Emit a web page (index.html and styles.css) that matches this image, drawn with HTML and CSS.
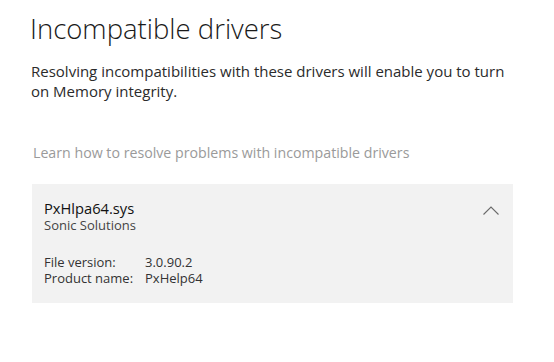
FILE: index.html
```html
<!DOCTYPE html>
<html>
<head>
<meta charset="utf-8">
<link rel="stylesheet" href="styles.css">
</head>
<body>
<main class="page">
  <h1 class="title">Incompatible drivers</h1>
  <p class="desc">Resolving incompatibilities with these drivers will enable you to turn on Memory integrity.</p>
  <a class="learn">Learn how to resolve problems with incompatible drivers</a>
  <section class="card">
    <div class="card-head">
      <div>
        <div class="name">PxHlpa64.sys</div>
        <div class="vendor">Sonic Solutions</div>
      </div>
      <svg class="chev" width="16" height="9" viewBox="0 0 16 9"><path d="M0.5 8.5 L8 1 L15.5 8.5" fill="none" stroke="#6a6a6a" stroke-width="1.1"/></svg>
    </div>
    <div class="props">
      <span class="k">File version:</span><span class="v">3.0.90.2</span>
      <span class="k">Product name:</span><span class="v">PxHelp64</span>
    </div>
  </section>
</main>
</body>
</html>
```
FILE: styles.css
```css
html, body { margin: 0; padding: 0; background: #fff; }
body { font-family: "Open Sans", "Noto Sans", sans-serif; color: #1a1a1a; }
.page { padding: 11px 41px 0 31px; width: 482px; }
.title { font-weight: 300; font-size: 27.5px; line-height: 36px; margin: 0 0 0 -1px; color: #1a1a1a; }
.desc { margin: 14px 0 0; font-size: 15px; line-height: 20px; color: #2b2b2b; }
.learn { display: block; margin: 42px 0 0 2px; font-size: 14.2px; line-height: 20px; color: #9a9a9a; }
.card { margin: 21px 0 0 1px; width: 481px; height: 119px; box-sizing: border-box; background: #f2f2f2; padding: 16px 14px 0 12px; }
.card-head { display: flex; justify-content: space-between; align-items: flex-start; }
.chev { margin-top: 6px; }
.name { font-size: 14.7px; line-height: 17px; color: #111; }
.vendor { font-size: 13px; line-height: 17px; color: #444; }
.props { display: grid; grid-template-columns: 101px auto; margin-top: 20px; font-size: 13px; line-height: 16px; color: #333; }
```
